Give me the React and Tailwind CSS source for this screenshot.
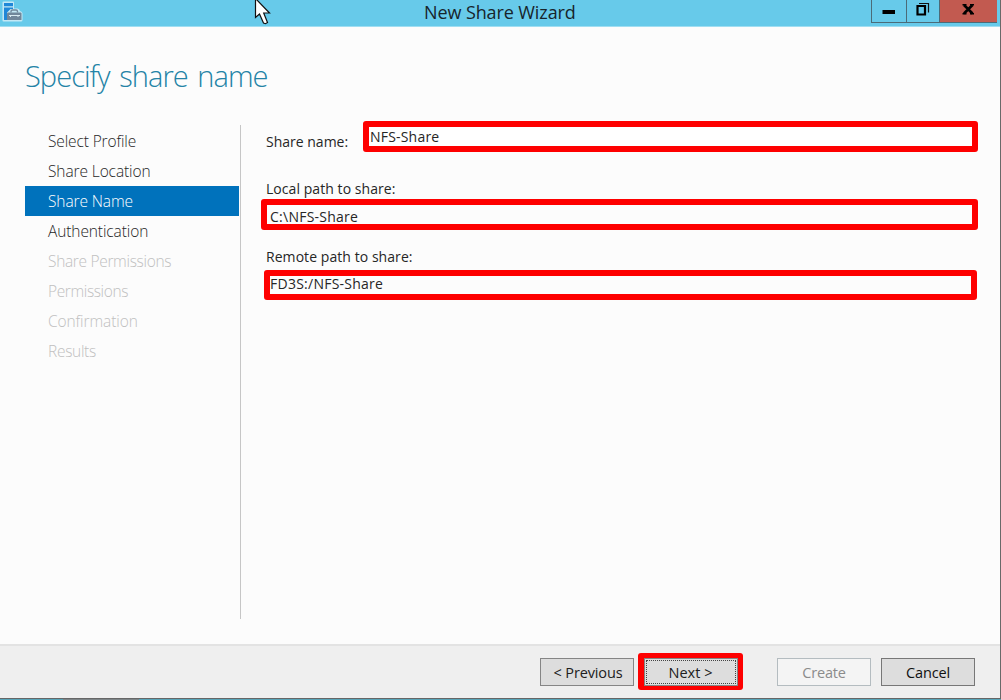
const steps = [
  { label: 'Select Profile', state: 'ready', fit: 'tracking-[-0.13px]' },
  { label: 'Share Location', state: 'ready', fit: 'tracking-[-0.1px]' },
  { label: 'Share Name', state: 'current', fit: 'tracking-[-0.1px]' },
  { label: 'Authentication', state: 'ready', fit: 'tracking-[-0.1px]' },
  { label: 'Share Permissions', state: 'locked', fit: 'tracking-[-0.32px]' },
  { label: 'Permissions', state: 'locked', fit: 'tracking-[-0.38px]' },
  { label: 'Confirmation', state: 'locked', fit: 'tracking-[-0.1px]' },
  { label: 'Results', state: 'locked', fit: 'tracking-[-0.3px]' },
];

const stepColors = {
  ready: 'text-[#262626]',
  current: 'bg-[#0072bc] text-white',
  locked: 'text-[#c0c0c0]',
};

function ServerIcon() {
  return (
    <svg className="ml-0.5 h-[21px] w-[21px]" viewBox="0 0 21 21">
      <path d="M.5 1.500Q.5.5 1.500.5H11q1 0 1 1V7.500h3.500q2 0 2.500 2.500 2.500.5 2.500 2.500V19q0 1.500-1.500 1.500H1.500q-1 0-1-1Z" fill="#c3e8f5" />
      <path d="M2 2h9v3.300H2zM2 6.500h9V8H8.500L5 11.500V19H2z" fill="#1f87d8" />
      <path d="M9 11.500V10.500Q9 9 10.500 9h3.500q1.500 0 1.500 1.500v1" fill="none" stroke="#71879b" strokeWidth="1.400" />
      <path d="M5 12.500q0-1 1-1h12.500q1 0 1 1V19H5Z" fill="#71879b" />
      <path d="M7 14.500h11" stroke="#d8ebf3" />
      <path d="M8.500 14v2M16 14v2" stroke="#d8ebf3" />
    </svg>
  );
}

function Pointer() {
  return (
    <svg className="absolute left-[254px] top-0 h-[26px] w-[17px]" viewBox="0 0 17 26">
      <path d="M1.500-1.500V17.500L5.500 14l4 9 2 .7 2-1.200L9.700 13H15.500Z" fill="#fff" stroke="#111" strokeWidth="1.200" />
    </svg>
  );
}

function TitleBar() {
  return (
    <header className="relative flex h-[27px] shrink-0 border-b border-[#a0def2] bg-[#67caea]">
      <div className="w-[424px] pt-px"><ServerIcon /></div>
      <h1 className="w-[447px] whitespace-nowrap text-[18px] leading-[24px] tracking-[-0.1px] text-[#17242b]">New Share Wizard</h1>
      <div className="flex h-[23px] w-[126px] border-x border-b border-[#4b6b78]">
        <button className="flex w-[35px] border-r border-[#4b6b78]" aria-label="Minimize">
          <svg className="h-[22px] w-[34px]" viewBox="0 0 34 22"><path d="M10.500 10h12.500v4H10.500z" /></svg>
        </button>
        <button className="flex w-[33px] border-r border-[#4b6b78]" aria-label="Restore">
          <svg className="h-[22px] w-[32px]" viewBox="0 0 32 22">
            <path d="M12 3.500h9.500v9" fill="none" stroke="#111" strokeWidth="1.200" />
            <path d="M10.500 6h7.500v8.500h-7.500z" fill="none" stroke="#000" strokeWidth="2.200" />
          </svg>
        </button>
        <button className="flex flex-1 bg-[#c25a50]" aria-label="Close">
          <svg className="h-[22px] w-[57px]" viewBox="0 0 57 22">
            <path d="M24 5l8.500 8.500M32.500 5L24 13.500" stroke="#000" strokeWidth="2.600" />
            <path d="M22.500 4h4v1.500h-4zM30 4h4v1.500h-4zM22.500 13h4v1.500h-4zM30 13h4v1.500h-4z" />
          </svg>
        </button>
      </div>
      <Pointer />
    </header>
  );
}

function Steps() {
  return (
    <nav className="mt-[22px] flex h-[494px] w-[216px] flex-col border-r border-[#c6c6c6] pr-px pt-[1px]">
      {steps.map((step) => (
        <a key={step.label} className={`flex h-[30px] shrink-0 items-center whitespace-nowrap pl-[23px] pt-[2px] text-[15.5px] font-light ${stepColors[step.state]} ${step.fit}`}>
          {step.label}
        </a>
      ))}
    </nav>
  );
}

function Form() {
  return (
    <section className="ml-[20px] mt-[18px] w-[717px] text-[14px] text-[#262626]">
      <div className="flex h-[31px]">
        <label className="w-[102px] whitespace-nowrap pl-[5px] pt-[10px] leading-[22px]">Share name:</label>
        <div className="h-[31px] w-[615px] whitespace-nowrap rounded-[3px] border-[6px] border-[#fe0000] bg-white pl-[1px] leading-[19px] tracking-[0.2px]">NFS-Share</div>
      </div>
      <label className="mt-[26px] block h-[21px] pl-[5px] leading-[21px] tracking-[0.06px]">Local path to share:</label>
      <div className="h-[31px] rounded-[3px] border-[6px] border-[#fe0000] pl-[3px] leading-[23px] tracking-[0.25px]">C:\NFS-Share</div>
      <label className="mt-[16px] block h-[24px] pl-[5px] leading-[21px] tracking-[0.06px]">Remote path to share:</label>
      <div className="ml-[3px] h-[30px] w-[713px] rounded-[3px] border-[6px] border-[#fe0000] leading-[15px] tracking-[0.25px]">FD3S:/NFS-Share</div>
    </section>
  );
}

const buttonBase = 'flex h-7 w-[94px] items-center justify-center whitespace-nowrap border text-[14.5px] leading-none';

function Footer() {
  return (
    <footer className="flex h-[54px] shrink-0 items-start border-t-2 border-[#e3e3e3] bg-[#efefef]">
      <button className={`${buttonBase} ml-[540px] mt-3 border-[#858585] bg-[#dddddd] pl-0.5 pt-[2px] tracking-[-0.15px] text-[#202020]`}>&lt; Previous</button>
      <div className="ml-1 mt-[7px] flex h-[37px] w-[105px] items-center justify-center rounded-[3px] bg-[#fe0000]">
        <button className={`${buttonBase} border-[#858585] bg-[#dddddd] p-px text-[#202020]`}>
          <span className="flex h-full w-full items-center justify-center border border-dotted border-[#444] pt-[3px]">Next &gt;</span>
        </button>
      </div>
      <button className={`${buttonBase} ml-[34px] mt-3 border-[#b4bcc0] bg-[#f4f4f4] pt-[2px] tracking-[-0.15px] text-[#8b8b8b]`}>Create</button>
      <button className={`${buttonBase} ml-[10px] mt-3 border-[#777] bg-[#dddddd] pt-[2px] tracking-[-0.15px] text-[#101010]`}>Cancel</button>
    </footer>
  );
}

export default function App() {
  return (
    <div className="flex h-[700px] w-[1001px] flex-col overflow-hidden bg-[#fcfcfc] font-['Open_Sans','Noto_Sans',sans-serif]">
      <div className="flex h-[698px] flex-col border-r border-[#696969]">
        <TitleBar />
        <main className="flex h-[617px] shrink-0 flex-col">
          <h2 className="ml-[25px] mt-[28px] h-[48px] whitespace-nowrap text-[29px] font-light leading-[42px] tracking-[-0.95px] text-[#2383a6] [word-spacing:3px]">Specify share name</h2>
          <div className="ml-[25px] flex">
            <Steps />
            <Form />
          </div>
        </main>
        <Footer />
      </div>
      <div className="h-px shrink-0 bg-[#666]" />
      <div className="flex h-px shrink-0 bg-[#58a5b8]">
        <i className="ml-[63px] w-[76px] bg-[#7d8588]" />
      </div>
    </div>
  );
}
